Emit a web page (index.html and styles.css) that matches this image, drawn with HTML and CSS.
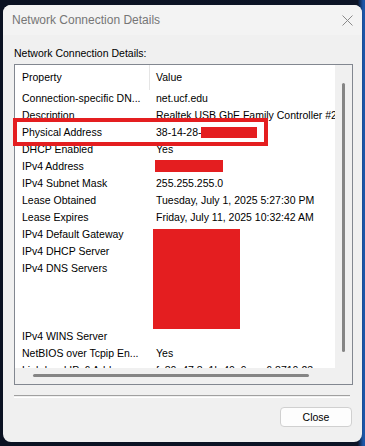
FILE: index.html
```html
<!DOCTYPE html>
<html lang="en">
<head>
  <meta charset="UTF-8">
  <meta name="viewport" content="width=device-width, initial-scale=1.0">
  <title>Network Connection Details</title>
  <link rel="stylesheet" href="styles.css">
</head>
<body>
  <div class="window">
    <div class="titlebar">
      <span class="title">Network Connection Details</span>
      <svg class="close-x" width="11" height="11" viewBox="0 0 11 11">
        <path d="M0.5 0.5 L10.5 10.5 M10.5 0.5 L0.5 10.5" stroke="#8a8a8a" stroke-width="1" fill="none"/>
      </svg>
    </div>
    <div class="content">
      <div class="caption">Network Connection Details:</div>
      <div class="listview">
        <div class="list-main">
          <div class="rows">
            <div class="header">
              <div class="cell prop">Property</div>
              <div class="cell val">Value</div>
            </div>
            <div class="row"><div class="cell prop">Connection-specific DN...</div><div class="cell val">net.ucf.edu</div></div>
            <div class="row"><div class="cell prop">Description</div><div class="cell val">Realtek USB GbE Family Controller #2</div></div>
            <div class="row"><div class="cell prop">Physical Address</div><div class="cell val">38-14-28-<span class="redact mac"></span></div></div>
            <div class="row"><div class="cell prop">DHCP Enabled</div><div class="cell val">Yes</div></div>
            <div class="row"><div class="cell prop">IPv4 Address</div><div class="cell val"><span class="redact ip"></span></div></div>
            <div class="row"><div class="cell prop">IPv4 Subnet Mask</div><div class="cell val">255.255.255.0</div></div>
            <div class="row"><div class="cell prop">Lease Obtained</div><div class="cell val">Tuesday, July 1, 2025 5:27:30 PM</div></div>
            <div class="row"><div class="cell prop">Lease Expires</div><div class="cell val">Friday, July 11, 2025 10:32:42 AM</div></div>
            <div class="row"><div class="cell prop">IPv4 Default Gateway</div><div class="cell val"></div></div>
            <div class="row"><div class="cell prop">IPv4 DHCP Server</div><div class="cell val"></div></div>
            <div class="row"><div class="cell prop">IPv4 DNS Servers</div><div class="cell val"></div></div>
            <div class="row"><div class="cell prop"></div><div class="cell val"></div></div>
            <div class="row"><div class="cell prop"></div><div class="cell val"></div></div>
            <div class="row"><div class="cell prop"></div><div class="cell val"></div></div>
            <div class="row"><div class="cell prop">IPv4 WINS Server</div><div class="cell val"></div></div>
            <div class="row"><div class="cell prop">NetBIOS over Tcpip En...</div><div class="cell val">Yes</div></div>
            <div class="row"><div class="cell prop">Link-local IPv6 Add...</div><div class="cell val">fe80::47:8a1b:40e9:aca6:8710:23</div></div>
            <div class="redact block"></div>
          </div>
          <div class="hscroll"><div class="hthumb"></div></div>
        </div>
        <div class="vscroll"><div class="vthumb"></div></div>
      </div>
      <div class="separator"></div>
      <div class="footer">
        <button class="close-btn">Close</button>
      </div>
    </div>
    <div class="highlight"></div>
  </div>
</body>
</html>
```

FILE: styles.css
```css
html, body{
  margin: 0;
  padding: 0;
  width: 100%;
  height: 100%;
}

body{
  background: linear-gradient(90deg, #0b1222 0, #0c1426 98%, #1d56a8 99.5%);
  font-family: "Liberation Sans", Arial, sans-serif;
  font-size: 10.5px;
  color: #000;
  overflow: hidden;
}

.window{
  position: relative;
  margin: 5px 3px 0 3px;
  width: 359px;
  height: 437px;
  border-radius: 8px;
  background-color: #f0f0f0;
  overflow: hidden;
}

.titlebar{
  height: 30px;
  display: flex;
  align-items: center;
  justify-content: space-between;
  padding: 0 9px;
  background-color: #f3f3f3;
}
.title{
  font-size: 12px;
  color: #767676;
}
.close-x{
  display: block;
}

.content{
  padding: 11px 9px 0 11px;
}
.caption{
  line-height: 14px;
}

.listview{
  margin-top: 4px;
  width: 337px;
  height: 319px;
  border: 1px solid #828790;
  background-color: #fff;
  display: flex;
}
.list-main{
  width: 320px;
  display: flex;
  flex-direction: column;
}
.rows{
  position: relative;
  height: 303px;
  overflow: hidden;
}
.header{
  display: flex;
  height: 25px;
  line-height: 25px;
}
.header .prop{
  border-right: 1px solid #e5e5e5;
  width: 127px;
}
.row{
  display: flex;
  height: 17px;
  line-height: 17px;
}
.cell{
  white-space: nowrap;
  overflow: hidden;
}
.prop{
  width: 128px;
  padding-left: 7px;
  flex-shrink: 0;
}
.val{
  padding-left: 6px;
  flex: 1;
}

.redact{
  background-color: #e41e20;
}
.mac{
  display: inline-block;
  width: 56px;
  height: 11px;
  margin-left: -1px;
  vertical-align: -2px;
}
.ip{
  display: inline-block;
  width: 68px;
  height: 12px;
  margin-left: -1px;
  vertical-align: -2px;
}
.block{
  position: absolute;
  left: 138px;
  top: 164px;
  width: 87px;
  height: 100px;
}

.hscroll{
  height: 16px;
  background-color: #f0f0f0;
  position: relative;
}
.hthumb{
  position: absolute;
  left: 18px;
  top: 6px;
  width: 276px;
  height: 3px;
  border-radius: 2px;
  background-color: #858585;
}
.vscroll{
  width: 17px;
  background-color: #f0f0f0;
  position: relative;
}
.vthumb{
  position: absolute;
  left: 7px;
  top: 18px;
  width: 3px;
  height: 269px;
  border-radius: 2px;
  background-color: #858585;
}

.separator{
  margin-top: 10px;
  width: 336px;
  height: 1px;
  border-top: 1px solid #a0a0a0;
  border-bottom: 1px solid #fff;
}

.footer{
  margin-top: 9px;
  display: flex;
  justify-content: flex-end;
  padding-right: 1px;
}
.close-btn{
  width: 72px;
  height: 20px;
  padding: 0;
  border: 1px solid #d0d0d0;
  border-radius: 4px;
  background-color: #fdfdfd;
  font-family: "Liberation Sans", Arial, sans-serif;
  font-size: 10.5px;
  color: #000;
}

.highlight{
  position: absolute;
  left: 10px;
  top: 113px;
  width: 247px;
  height: 20px;
  border: 4px solid #e41e20;
}
```
